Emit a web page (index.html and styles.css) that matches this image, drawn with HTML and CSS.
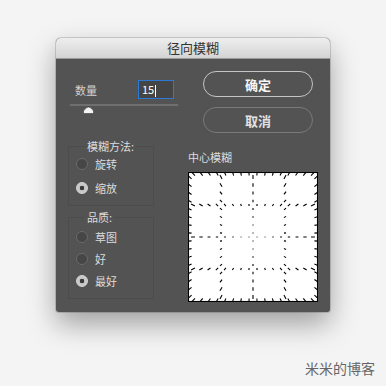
FILE: index.html
```html
<!DOCTYPE html>
<html>

<head>
    <title>径向模糊</title>
<meta name="viewport" content="width=device-width, initial-scale=1">
<link rel="stylesheet" href="styles.css">
</head>

<body>

<div class="dialog">
  <div class="titlebar">径向模糊</div>
  <div class="content">
    <div class="col-left">
      <div class="amount">
        <span class="label">数量</span>
        <div class="field">15<span class="caret"></span></div>
      </div>
      <div class="slider">
        <div class="track"></div>
        <svg class="thumb" width="11" height="10" viewBox="0 0 11 10">
          <path d="M0.5 9.5 V7 Q5.5 -1 10.5 7 V9.5 Z" fill="#f4f4f4" stroke="#3a3a3a" stroke-width="0.6"/>
        </svg>
      </div>
      <fieldset class="group method">
        <legend>模糊方法:</legend>
        <label class="radio"><span class="dot"></span>旋转</label>
        <label class="radio"><span class="dot on"></span>缩放</label>
      </fieldset>
      <fieldset class="group quality">
        <legend>品质:</legend>
        <label class="radio"><span class="dot"></span>草图</label>
        <label class="radio"><span class="dot"></span>好</label>
        <label class="radio"><span class="dot on"></span>最好</label>
      </fieldset>
    </div>
    <div class="col-right">
      <button class="btn primary">确定</button>
      <button class="btn">取消</button>
      <div class="preview-title">中心模糊</div>
      <svg class="preview" id="blur" width="130" height="130" viewBox="0 0 130 130"></svg>
    </div>
  </div>
</div>

<div class="watermark">米米的博客</div>

<script>
    // grid lines smeared away from the centre, like a zoom blur
    var cx = 65, cy = 65;
    var grid = [1.5, 33, 65, 97, 128.5];
    var out = '<rect x="0.5" y="0.5" width="129" height="129" fill="#fff" stroke="#000"/>';

    function tick(x, y) {
      var dx = x - cx, dy = y - cy;
      var r = Math.sqrt(dx * dx + dy * dy);
      if (r < 1) {
        out += '<rect x="' + (x - 1) + '" y="' + (y - 1) + '" width="2" height="2"/>';
        return;
      }
      var half = Math.max(0.8, r * 0.065) / 2;
      var ux = dx / r * half, uy = dy / r * half;
      out += '<line x1="' + (x - ux).toFixed(2) + '" y1="' + (y - uy).toFixed(2) +
             '" x2="' + (x + ux).toFixed(2) + '" y2="' + (y + uy).toFixed(2) + '"/>';
    }

    for (var i = 0; i < grid.length; i++) {
      for (var t = 5; t < 130; t += 8) {
        tick(grid[i], t);
        tick(t, grid[i]);
      }
    }
    out = '<g stroke="#000" stroke-width="1.1">' + out + '</g>';
    document.getElementById('blur').innerHTML = out;
</script>

</body>
</html>
```

FILE: styles.css
```css
* {
  box-sizing: border-box;
}

body {
  margin: 0;
  background: #f4f4f4;
  font-family: "Noto Sans CJK SC", "Noto Sans", sans-serif;
}

.dialog {
  width: 274px;
  height: 274px;
  margin: 38px 0 0 56px;
  background: #535353;
  border-radius: 5px 5px 3px 3px;
  box-shadow: 0 0 0 1px rgba(0, 0, 0, 0.15), 0 12px 28px rgba(0, 0, 0, 0.35);
  overflow: hidden;
}

.titlebar {
  height: 21px;
  background: linear-gradient(#eeeeee, #d4d4d4);
  border-bottom: 1px solid #9a9a9a;
  color: #333;
  font-size: 13px;
  line-height: 20px;
  text-align: center;
}

.content {
  display: flex;
}

.col-left {
  width: 132px;
}

.amount {
  display: flex;
  align-items: center;
  height: 19px;
  margin-top: 21px;
  padding-left: 19px;
}

.amount .label {
  width: 63px;
  font-size: 11px;
  color: #d0d0d0;
}

.field {
  width: 36px;
  height: 19px;
  border: 1px solid #2c7ad6;
  background: #454545;
  color: #fff;
  font-size: 11px;
  line-height: 17px;
  padding-left: 3px;
}

.caret {
  display: inline-block;
  width: 1px;
  height: 12px;
  margin-left: 1px;
  background: #fff;
  vertical-align: middle;
}

.slider {
  position: relative;
  width: 108px;
  height: 10px;
  margin: 5px 0 0 14px;
}

.track {
  height: 2px;
  margin-top: 5px;
  background: #6f6f6f;
}

.thumb {
  position: absolute;
  left: 13px;
  top: 0;
}

.group {
  width: 86px;
  margin: 0 0 0 12px;
  border: 1px solid rgba(0, 0, 0, 0.08);
  padding: 0 0 6px 7px;
}

.group legend {
  margin-left: 9px;
  padding: 0 2px;
  font-size: 11px;
  line-height: 14px;
  color: #dcdcdc;
}

.method {
  margin-top: 25px;
}

.method .radio + .radio {
  margin-top: 2px;
}

.quality {
  margin-top: 4px;
  padding-top: 2px;
}

.radio {
  display: flex;
  align-items: center;
  gap: 7px;
  height: 22px;
  font-size: 11px;
  color: #dcdcdc;
}

.dot {
  width: 12px;
  height: 12px;
  border-radius: 50%;
  border: 1px solid #6a6a6a;
  background: #464646;
}

.dot.on {
  border-color: #d6d6d6;
  background: radial-gradient(circle, #3a3a3a 0 2px, #c8c8c8 2.6px);
}

.col-right {
  width: 130px;
}

.btn {
  display: block;
  width: 110px;
  height: 26px;
  margin: 10px 0 0 15px;
  border: 1px solid #7a7a7a;
  border-radius: 13px;
  background: transparent;
  color: #e2e2e2;
  font-family: "Noto Sans CJK SC", sans-serif;
  font-size: 13px;
  font-weight: bold;
  padding: 0;
}

.btn.primary {
  margin-top: 12px;
  border-color: #c4c4c4;
  color: #f6f6f6;
}

.preview-title {
  margin-top: 17px;
  font-size: 11px;
  line-height: 14px;
  color: #dcdcdc;
}

.preview {
  display: block;
  margin-top: 8px;
}

.watermark {
  margin-top: 46px;
  padding-right: 11px;
  text-align: right;
  font-size: 14px;
  line-height: 20px;
  color: #666;
}
```
